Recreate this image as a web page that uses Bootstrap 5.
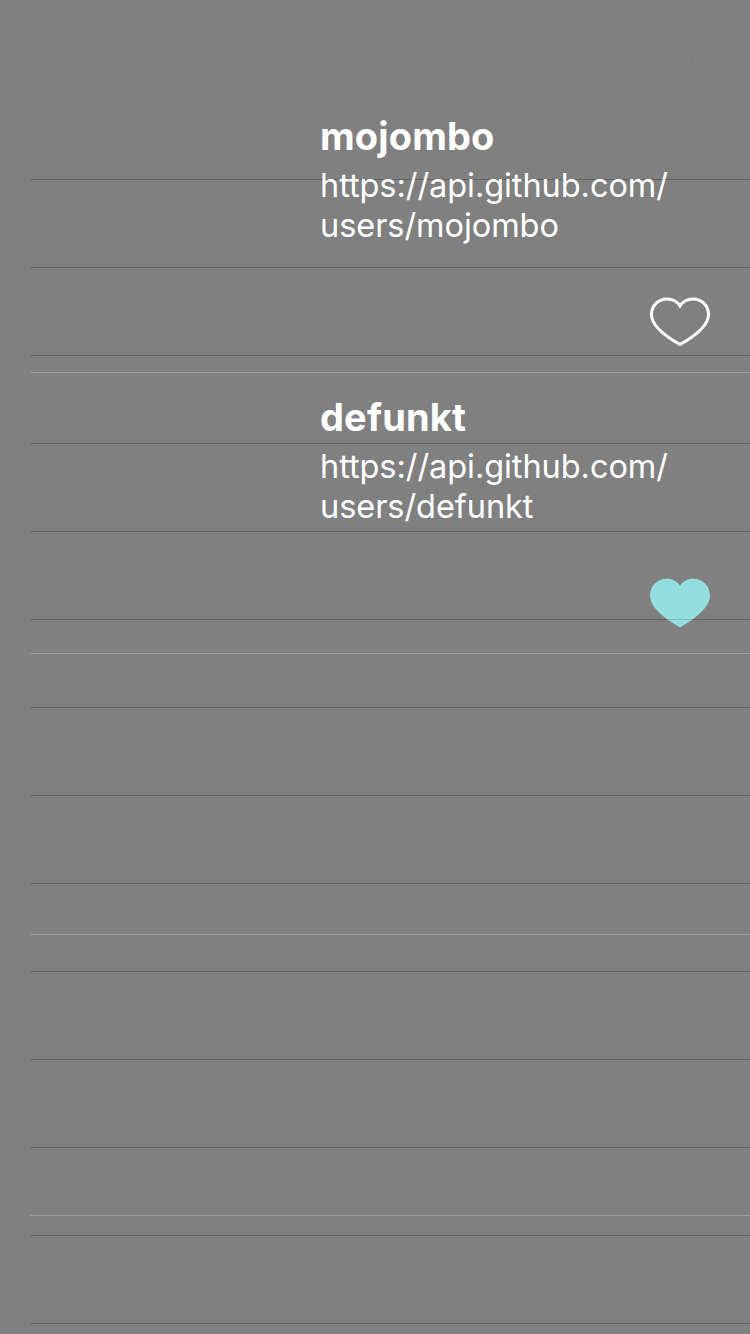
<!DOCTYPE html>
<html lang="en">
<head>
<meta charset="utf-8">
<meta name="viewport" content="width=device-width, initial-scale=1">
<title>Users</title>
<link rel="stylesheet" href="https://cdn.jsdelivr.net/npm/bootstrap@5.3.0/dist/css/bootstrap.min.css">
<style>
body{background:#808080;font-family:Inter,"Liberation Sans",sans-serif;color:#fff}
.screen{height:1334px}
.topbar{height:92px;padding:23px 29px 0 0}
.layers{display:grid;height:1242px}
.layers>*{grid-area:1/1;min-width:0}
.backrow{height:88px;margin-left:30px;border-bottom:1px solid #636363}
.user{height:281px;margin-left:30px;border-bottom:1px solid #9c9c9c;padding:24px 40px 25px 290px}
.login{font-size:38px;line-height:40px;font-weight:700;letter-spacing:.15px}
.url{font-size:32.500px;line-height:40px;margin-top:10px;letter-spacing:-.06px;white-space:nowrap}
.heart{width:60px;height:50px;display:block}
</style>
<script src="https://cdn.jsdelivr.net/npm/bootstrap@5.3.0/dist/js/bootstrap.bundle.min.js"></script>
</head>
<body>
<main class="screen overflow-hidden">
  <header class="topbar d-flex justify-content-end">
    <svg width="44" height="48" viewBox="0 0 44 48" fill="none" stroke="#7e7e7e" stroke-width="2"><path d="M1 13.500H43M3 15L15 29V45H29V29L41 15M8 4L14 8M24 7L28 4L32 7" /></svg>
  </header>
  <div class="layers">
    <div>
      <div class="backrow"></div><div class="backrow"></div><div class="backrow"></div><div class="backrow"></div><div class="backrow"></div><div class="backrow"></div><div class="backrow"></div><div class="backrow"></div><div class="backrow"></div><div class="backrow"></div><div class="backrow"></div><div class="backrow"></div><div class="backrow"></div><div class="backrow"></div>
    </div>
    <div class="position-relative">
      <section class="user d-flex flex-column">
        <div class="login">mojombo</div>
        <div class="url">https://api.github.com/<br>users/mojombo</div>
        <svg class="heart ms-auto mt-auto" viewBox="0 0 60 50"><path fill="none" stroke="#fff" stroke-width="3" d="M30 47.500C14 38.500 1.500 27.500 1.500 17.500C1.500 8.500 8.500 2 17 2C22.500 2 27.500 5 30 9C32.500 5 37.500 2 43 2C51.500 2 58.500 8.500 58.500 17.500C58.500 27.500 46 38.500 30 47.500Z"/></svg>
      </section>
      <section class="user d-flex flex-column">
        <div class="login">defunkt</div>
        <div class="url">https://api.github.com/<br>users/defunkt</div>
        <svg class="heart ms-auto mt-auto" viewBox="0 0 60 50"><path fill="#94dee0" d="M30 49.200C13 40 0 28.500 0 17.500C0 7.800 7.500 .8 17 .8C22.500 .8 27.500 3.500 30 7.800C32.500 3.500 37.500 .8 43 .8C52.500 .8 60 7.800 60 17.500C60 28.500 47 40 30 49.200Z"/><path d="M18 41.500H42" stroke="#7bb6b8"/></svg>
      </section>
      <section class="user"></section>
      <section class="user"></section>
    </div>
  </div>
</main>
</body>
</html>
